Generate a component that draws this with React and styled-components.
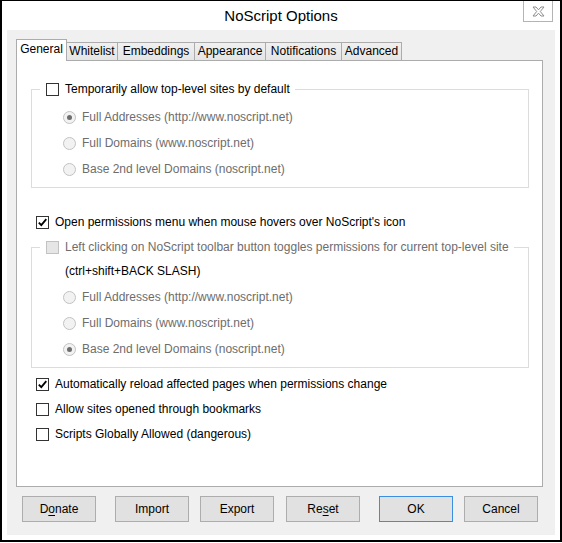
import React from "react";
import styled, { createGlobalStyle } from "styled-components";

const GlobalStyle = createGlobalStyle`
  html, body { margin: 0; padding: 0; background: #fff; }
  body {
    font-family: "Segoe UI", "Liberation Sans", Arial, sans-serif;
    font-size: 12px;
    color: #000;
  }
  * { box-sizing: border-box; }
`;

const Window = styled.div`
  width: 562px;
  height: 542px;
  border: 2px solid #000;
  border-top-width: 1px;
  padding: 0 5px 5px;
  background: #fff;
  display: flex;
  flex-direction: column;
`;

const TitleBar = styled.div`
  height: 29px;
  flex: none;
  display: grid;
  grid-template-columns: 1fr auto 1fr;
`;

const Title = styled.div`
  grid-column: 2;
  align-self: center;
  font-size: 15px;
  line-height: 18px;
`;

const CloseButton = styled.div`
  grid-column: 3;
  justify-self: end;
  align-self: start;
  width: 30px;
  height: 21px;
  margin-right: 2px;
  border: 1px solid #b4b4b4;
  border-top: none;
  display: flex;
  align-items: center;
  justify-content: center;
`;

const Body = styled.div`
  flex: 1;
  background: #f0f0f0;
  padding: 9px 12px 0 9px;
  display: flex;
  flex-direction: column;
`;

const TabStrip = styled.div`
  height: 21px;
  display: flex;
  align-items: flex-end;
  position: relative;
  z-index: 1;
`;

const Tab = styled.div`
  width: ${(p) => p.$w}px;
  height: ${(p) => (p.$active ? 22 : 18)}px;
  margin-left: ${(p) => (p.$first ? 0 : -1)}px;
  margin-bottom: ${(p) => (p.$active ? -1 : 0)}px;
  border: 1px solid #acacac;
  border-bottom: none;
  background: ${(p) => (p.$active ? "#fff" : "linear-gradient(#f0f0f0, #e5e5e5)")};
  position: relative;
  z-index: ${(p) => (p.$active ? 2 : 1)};
  display: flex;
  align-items: center;
  justify-content: center;
  padding-bottom: ${(p) => (p.$active ? 3 : 0)}px;
  line-height: 15px;
  white-space: nowrap;
`;

const Pane = styled.div`
  height: 427px;
  background: #fff;
  border: 1px solid #acacac;
  padding: 0 13px 0 14px;
  display: flex;
  flex-direction: column;
`;

const Group = styled.fieldset`
  margin: ${(p) => p.$mt}px 0 0;
  padding: 0 0 5px;
  min-width: 0;
  border: 1px solid #dcdcdc;
`;

const Legend = styled.legend`
  margin-left: 8px;
  padding: 0 5px 0 6px;
  height: 16px;
  display: flex;
  align-items: center;
  gap: 6px;
  line-height: 15px;
  color: ${(p) => (p.$disabled ? "#6d6d6d" : "#000")};
`;

const Rows = styled.div`
  padding-top: ${(p) => p.$pt}px;
  display: flex;
  flex-direction: column;
`;

const OptionRow = styled.div`
  height: ${(p) => p.$h}px;
  padding-left: ${(p) => p.$indent}px;
  display: flex;
  align-items: center;
  gap: 6px;
  line-height: 15px;
  white-space: nowrap;
  color: ${(p) => (p.$disabled ? "#6d6d6d" : "#000")};
`;

const CheckList = styled.div`
  margin-top: ${(p) => p.$mt}px;
  display: flex;
  flex-direction: column;
`;

const Box = styled.span`
  width: 13px;
  height: 13px;
  flex: none;
  border: 1px solid ${(p) => (p.$disabled ? "#c2c2c2" : "#333")};
  background: ${(p) => (p.$disabled ? "#e6e6e6" : "#fff")};
  display: flex;
  align-items: center;
  justify-content: center;
`;

const Radio = styled.span`
  width: 13px;
  height: 13px;
  flex: none;
  border-radius: 50%;
  border: 1px solid #c2c2c2;
  background: #f2f2f2;
  display: flex;
  align-items: center;
  justify-content: center;
  &::after {
    content: "";
    display: ${(p) => (p.$checked ? "block" : "none")};
    width: 5px;
    height: 5px;
    border-radius: 50%;
    background: #6d6d6d;
  }
`;

const ButtonRow = styled.div`
  margin-top: 9px;
  padding-left: 6px;
  display: flex;
`;

const Button = styled.div`
  width: 74px;
  height: 26px;
  margin-left: ${(p) => p.$gap || 0}px;
  background: #e1e1e1;
  border: 1px solid ${(p) => (p.$default ? "#3c8fe0" : "#adadad")};
  display: flex;
  align-items: center;
  justify-content: center;
  line-height: 15px;
  u { text-decoration-thickness: 1px; text-underline-offset: 2px; }
`;

function Checkbox({ checked, disabled }) {
  return (
    <Box $disabled={disabled}>
      {checked && (
        <svg width="11" height="11" viewBox="0 0 11 11">
          <polyline
            points="1.8,5.6 4.3,8.2 9.3,2.2"
            fill="none"
            stroke="#000"
            strokeWidth="1.8"
          />
        </svg>
      )}
    </Box>
  );
}

function CloseGlyph() {
  return (
    <svg width="13" height="11" viewBox="0 0 13 11">
      <polygon
        points="1,1 4,1 6.5,3.8 9,1 12,1 8.3,5.5 12,10 9,10 6.5,7.2 4,10 1,10 4.7,5.5"
        fill="#fff"
        stroke="#8c8c8c"
        strokeWidth="1"
        strokeLinejoin="miter"
      />
    </svg>
  );
}

const tabs = [
  { label: "General", w: 51 },
  { label: "Whitelist", w: 52 },
  { label: "Embeddings", w: 78 },
  { label: "Appearance", w: 72 },
  { label: "Notifications", w: 77 },
  { label: "Advanced", w: 61 },
];

function DomainChoices({ checkedIndex }) {
  const items = [
    "Full Addresses (http://www.noscript.net)",
    "Full Domains (www.noscript.net)",
    "Base 2nd level Domains (noscript.net)",
  ];
  return items.map((text, i) => (
    <OptionRow key={text} $h={26} $indent={31} $disabled>
      <Radio $checked={i === checkedIndex} />
      {text}
    </OptionRow>
  ));
}

export default function App() {
  return (
    <>
      <GlobalStyle />
      <Window>
        <TitleBar>
          <Title>NoScript Options</Title>
          <CloseButton>
            <CloseGlyph />
          </CloseButton>
        </TitleBar>
        <Body>
          <TabStrip>
            {tabs.map((t, i) => (
              <Tab key={t.label} $w={t.w} $active={i === 0} $first={i === 0}>
                {t.label}
              </Tab>
            ))}
          </TabStrip>
          <Pane>
            <Group $mt={20}>
              <Legend>
                <Checkbox />
                Temporarily allow top-level sites by default
              </Legend>
              <Rows $pt={7}>
                <DomainChoices checkedIndex={0} />
              </Rows>
            </Group>

            <CheckList $mt={22}>
              <OptionRow $h={24} $indent={5}>
                <Checkbox checked />
                Open permissions menu when mouse hovers over NoScript's icon
              </OptionRow>
            </CheckList>

            <Group $mt={5}>
              <Legend $disabled>
                <Checkbox disabled />
                Left clicking on NoScript toolbar button toggles permissions for current top-level site
              </Legend>
              <Rows $pt={3}>
                <OptionRow $h={26} $indent={33}>
                  (ctrl+shift+BACK SLASH)
                </OptionRow>
                <DomainChoices checkedIndex={2} />
              </Rows>
            </Group>

            <CheckList $mt={4}>
              <OptionRow $h={25} $indent={5}>
                <Checkbox checked />
                Automatically reload affected pages when permissions change
              </OptionRow>
              <OptionRow $h={25} $indent={5}>
                <Checkbox />
                Allow sites opened through bookmarks
              </OptionRow>
              <OptionRow $h={25} $indent={5}>
                <Checkbox />
                Scripts Globally Allowed (dangerous)
              </OptionRow>
            </CheckList>
          </Pane>
          <ButtonRow>
            <Button>
              D<u>o</u>nate
            </Button>
            <Button $gap={19}>Import</Button>
            <Button $gap={11}>Export</Button>
            <Button $gap={12}>
              Re<u>s</u>et
            </Button>
            <Button $gap={19} $default>
              OK
            </Button>
            <Button $gap={11}>Cancel</Button>
          </ButtonRow>
        </Body>
      </Window>
    </>
  );
}
